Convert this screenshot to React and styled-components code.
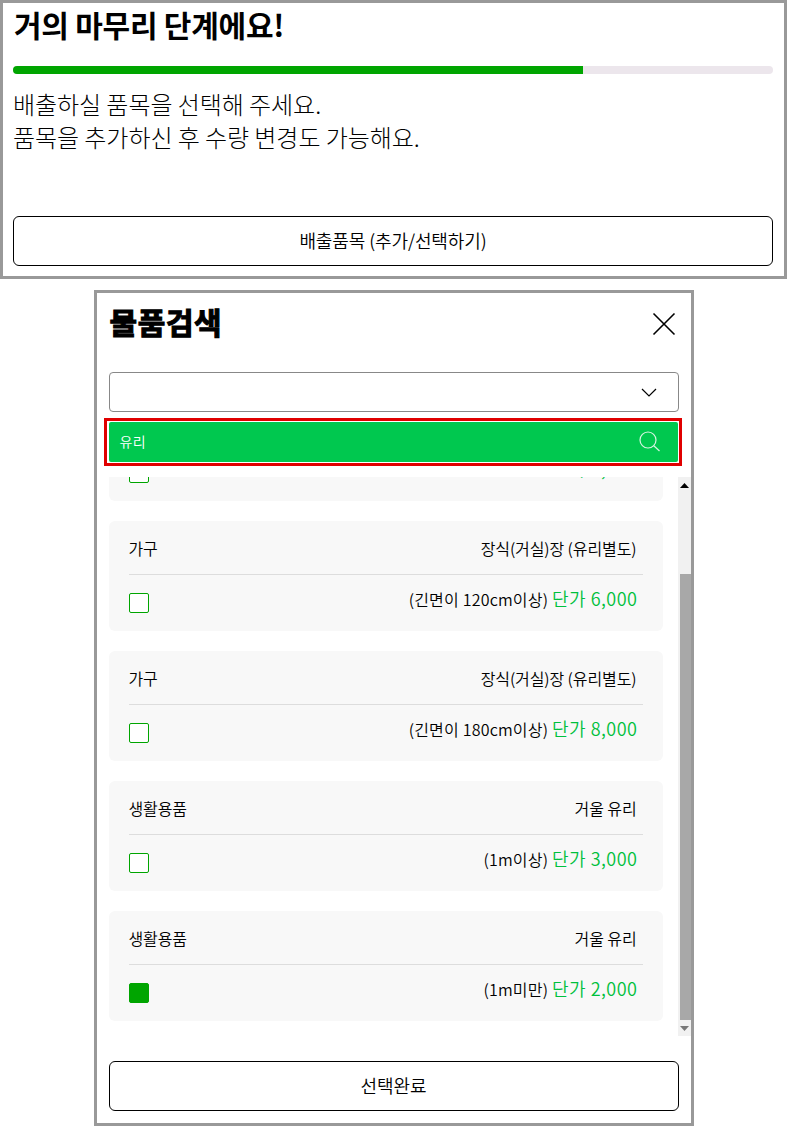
import React, { useLayoutEffect, useRef } from 'react';
import styled, { createGlobalStyle } from 'styled-components';

const GlobalStyle = createGlobalStyle`
  html, body { margin: 0; padding: 0; background: #fff; }
  * { box-sizing: border-box; }
  body { font-family: "Noto Sans CJK KR", "Noto Sans", sans-serif; color: #000; }
`;

const Page = styled.div`
  width: 787px;
  height: 1126px;
  overflow: hidden;
  display: flex;
  flex-direction: column;
  align-items: center;
`;

const StepPanel = styled.section`
  width: 787px;
  height: 279px;
  border: 3px solid #999;
  padding: 0 11px 0 10px;
  display: flex;
  flex-direction: column;
`;

const StepTitle = styled.h1`
  margin: 0 0 0 1px;
  height: 48px;
  font-size: 30px;
  line-height: 42px;
  font-weight: 700;
  letter-spacing: -0.25px;
`;

const Progress = styled.div`
  margin-top: 15px;
  height: 8px;
  border-radius: 4px;
  background: #ece6ec;
  overflow: hidden;
`;

const ProgressFill = styled.div`
  height: 100%;
  background: #00a500;
`;

const StepText = styled.p`
  margin: 13px 0 0;
  font-size: 24px;
  line-height: 33px;
  font-weight: 300;
  letter-spacing: -0.05px;
  flex: 1;
`;

const OutlineButton = styled.button`
  display: block;
  width: 100%;
  height: 50px;
  flex: none;
  border: 1px solid #000;
  border-radius: 6px;
  background: #fff;
  color: #000;
  font: inherit;
  font-size: 18px;
  font-weight: 350;
  letter-spacing: -0.1px;
  padding: 0 0 3px;
`;

const StepFooter = styled.div`
  padding-bottom: 10px;
`;

const Modal = styled.section`
  margin-top: 11px;
  width: 600px;
  height: 836px;
  border: 3px solid #999;
  display: flex;
  flex-direction: column;
`;

const ModalHeader = styled.header`
  height: 79px;
  flex: none;
  padding: 0 15px 18px 12px;
  display: flex;
  align-items: center;
  justify-content: space-between;
`;

const ModalTitle = styled.h2`
  margin: 0 0 5px 1px;
  font-size: 30px;
  font-weight: 700;
  line-height: 44px;
  letter-spacing: 0.6px;
  -webkit-text-stroke: 1.1px #000;
`;

const IconButton = styled.span`
  display: flex;
`;

const SelectBox = styled.div`
  margin: 0 12px;
  height: 40px;
  flex: none;
  border: 1px solid #888;
  border-radius: 4px;
  display: flex;
  align-items: center;
  justify-content: flex-end;
  padding-right: 21px;
`;

const SearchFrame = styled.div`
  margin: 6px 9px 0 7px;
  height: 48px;
  flex: none;
  border: 3px solid #e00000;
  padding: 0 1px 0 2px;
  display: flex;
  align-items: center;
`;

const SearchBar = styled.div`
  flex: 1;
  height: 40px;
  border-radius: 2px;
  background: #00c84f;
  color: #fff;
  font-size: 14px;
  font-weight: 350;
  letter-spacing: 0.3px;
  padding: 0 18px 2px 11px;
  display: flex;
  align-items: center;
  justify-content: space-between;
`;

const ListArea = styled.div`
  margin-top: 11px;
  height: 559px;
  flex: none;
  display: flex;
`;

const ListViewport = styled.div`
  flex: 1;
  height: 100%;
  overflow-y: auto;
  padding: 0 15px 15px 12px;
  scrollbar-width: none;
  &::-webkit-scrollbar { display: none; }
`;

const Card = styled.article`
  height: 110px;
  border-radius: 6px;
  background: #f8f8f8;
  padding: 0 20px;
  & + & { margin-top: 20px; }
`;

const CardTop = styled.div`
  height: 54px;
  border-bottom: 1px solid #ddd;
  display: flex;
  align-items: center;
  justify-content: space-between;
  padding-right: 6px;
  font-size: 16px;
  font-weight: 350;
  letter-spacing: -0.1px;
`;

const CardBottom = styled.div`
  height: 56px;
  padding-right: 5px;
  display: flex;
  align-items: center;
  justify-content: space-between;
`;

const Check = styled.span`
  width: 20px;
  height: 20px;
  border: 1px solid #00a500;
  border-radius: 2px;
  background: ${(p) => (p.$checked ? '#00a500' : '#fff')};
`;

const Detail = styled.span`
  margin-bottom: 11px;
  font-size: 16px;
  font-weight: 350;
  letter-spacing: 0.2px;
`;

const Price = styled.span`
  font-size: 18px;
  letter-spacing: 0.5px;
  color: #00c03c;
`;

const Scrollbar = styled.div`
  width: 13px;
  flex: none;
  background: #f1f1f1;
  display: flex;
  flex-direction: column;
  justify-content: flex-end;
  align-items: flex-end;
`;

const ScrollArrow = styled.span`
  width: 13px;
  height: 16px;
  flex: none;
  display: flex;
  align-items: center;
  justify-content: center;
  &:first-child { margin-bottom: auto; }
`;

const ScrollThumb = styled.div`
  width: 11px;
  height: 446px;
  flex: none;
  background: #a8a8a8;
`;

const ModalFooter = styled.footer`
  margin-top: 25px;
  padding: 0 12px;
`;

const ITEMS = [
  { id: 1, category: '가구', name: '장식(거실)장 (유리별도)', size: '', price: '4,000' },
  { id: 2, category: '가구', name: '장식(거실)장 (유리별도)', size: '(긴면이 120cm이상)', price: '6,000' },
  { id: 3, category: '가구', name: '장식(거실)장 (유리별도)', size: '(긴면이 180cm이상)', price: '8,000' },
  { id: 4, category: '생활용품', name: '거울 유리', size: '(1m이상)', price: '3,000' },
  { id: 5, category: '생활용품', name: '거울 유리', size: '(1m미만)', price: '2,000', checked: true },
];

const ItemCard = ({ item }) => (
  <Card>
    <CardTop>
      <span>{item.category}</span>
      <span>{item.name}</span>
    </CardTop>
    <CardBottom>
      <Check $checked={item.checked} />
      <Detail>
        {item.size} <Price>단가 {item.price}</Price>
      </Detail>
    </CardBottom>
  </Card>
);

const App = () => {
  const listRef = useRef(null);

  useLayoutEffect(() => {
    listRef.current.scrollTop = listRef.current.scrollHeight;
  }, []);

  return (
    <Page>
      <GlobalStyle />
      <StepPanel>
        <StepTitle>거의 마무리 단계에요!</StepTitle>
        <Progress>
          <ProgressFill style={{ width: '75%' }} />
        </Progress>
        <StepText>
          배출하실 품목을 선택해 주세요.
          <br />
          품목을 추가하신 후 수량 변경도 가능해요.
        </StepText>
        <StepFooter>
          <OutlineButton>배출품목 (추가/선택하기)</OutlineButton>
        </StepFooter>
      </StepPanel>

      <Modal>
        <ModalHeader>
          <ModalTitle>물품검색</ModalTitle>
          <IconButton>
            <svg width="24" height="24" viewBox="0 0 24 24" fill="none" stroke="#000" strokeWidth="1.6">
              <path d="M1.5 1.5 22.5 22.5M22.5 1.5 1.5 22.5" />
            </svg>
          </IconButton>
        </ModalHeader>
        <SelectBox>
          <svg width="16" height="9" viewBox="0 0 16 9" fill="none" stroke="#000" strokeWidth="1.2">
            <path d="M1 1 8 8 15 1" />
          </svg>
        </SelectBox>
        <SearchFrame>
          <SearchBar>
            <span>유리</span>
            <svg width="21" height="21" viewBox="0 0 21 21" fill="none" stroke="#d6f5e2" strokeWidth="1.2">
              <circle cx="9" cy="9" r="8" />
              <path d="M14.8 14.8 20.5 20" />
            </svg>
          </SearchBar>
        </SearchFrame>
        <ListArea>
          <ListViewport ref={listRef}>
            {ITEMS.map((item) => (
              <ItemCard key={item.id} item={item} />
            ))}
          </ListViewport>
          <Scrollbar>
            <ScrollArrow>
              <svg width="9" height="5" viewBox="0 0 9 5" fill="#000"><path d="M4.5 0 9 5H0z" /></svg>
            </ScrollArrow>
            <ScrollThumb />
            <ScrollArrow>
              <svg width="9" height="5" viewBox="0 0 9 5" fill="#777"><path d="M0 0h9L4.5 5z" /></svg>
            </ScrollArrow>
          </Scrollbar>
        </ListArea>
        <ModalFooter>
          <OutlineButton>선택완료</OutlineButton>
        </ModalFooter>
      </Modal>
    </Page>
  );
};

export default App;
